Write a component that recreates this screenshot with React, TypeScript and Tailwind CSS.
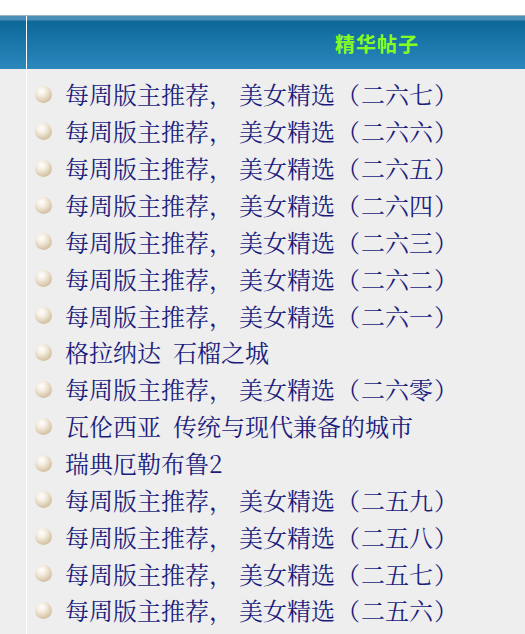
import React from "react";

const items = [
  "每周版主推荐，美女精选（二六七）",
  "每周版主推荐，美女精选（二六六）",
  "每周版主推荐，美女精选（二六五）",
  "每周版主推荐，美女精选（二六四）",
  "每周版主推荐，美女精选（二六三）",
  "每周版主推荐，美女精选（二六二）",
  "每周版主推荐，美女精选（二六一）",
  "格拉纳达\u2002石榴之城",
  "每周版主推荐，美女精选（二六零）",
  "瓦伦西亚\u2002传统与现代兼备的城市",
  "瑞典厄勒布鲁2",
  "每周版主推荐，美女精选（二五九）",
  "每周版主推荐，美女精选（二五八）",
  "每周版主推荐，美女精选（二五七）",
  "每周版主推荐，美女精选（二五六）",
];

function Title({ text }: { text: string }) {
  const idx = text.indexOf("，");
  if (idx < 0) return <>{text}</>;
  const before = text.slice(0, idx);
  const rest = text.slice(idx + 1);
  const p = rest.indexOf("（");
  return (
    <>
      {before}
      <span className="mr-[6px]">，</span>
      {p < 0 ? (
        rest
      ) : (
        <>
          {rest.slice(0, p)}
          <span className="ml-[1px] mr-[1px]">（</span>
          {rest.slice(p + 1, rest.length - 1)}
          <span className="ml-[1px]">）</span>
        </>
      )}
    </>
  );
}

export default function App() {
  return (
    <div className="w-[525px] h-[634px] overflow-hidden bg-white flex flex-col">
      <div className="h-[15px] bg-white" />
      <div className="h-[1px] bg-[#9fb3c2]" />
      <div className="flex h-[53px]">
        <div className="w-[26px] bg-[linear-gradient(to_bottom,#4b8fb8_0px,#4b8fb8_4px,#0d6799_5px,#2b88bd_100%)]" />
        <div className="w-[1px] bg-white" />
        <div className="flex-1 bg-[linear-gradient(to_bottom,#4b8fb8_0px,#4b8fb8_4px,#0d6799_5px,#2b88bd_100%)] flex items-center pl-[308px] pt-[2px]">
          <span
            className="text-[20px] font-bold text-[#86ff20] leading-none tracking-[1px]"
            style={{ fontFamily: '"Noto Sans CJK SC", sans-serif' }}
          >
            精华帖子
          </span>
        </div>
      </div>
      <div className="flex flex-1 bg-[#eeeeee]">
        <div className="w-[26px]" />
        <div className="w-[1px] bg-white" />
        <div className="flex-1 pt-[7px] pl-[8px]">
          {items.map((t, i) => (
            <div key={i} className="flex items-center h-[36.86px]">
              <span className="w-[17px] h-[17px] rounded-full bg-[radial-gradient(circle_at_38%_30%,#ffffff_0%,#f4ece0_30%,#d3bf9f_75%,#a88f69_100%)] shrink-0" />
              <span
                className="ml-[13px] text-[24px] leading-none text-[#1c1c7c] whitespace-nowrap"
                style={{ fontFamily: '"Noto Serif CJK SC", "Noto Sans CJK SC", serif' }}
              >
                <Title text={t} />
              </span>
            </div>
          ))}
        </div>
      </div>
    </div>
  );
}
